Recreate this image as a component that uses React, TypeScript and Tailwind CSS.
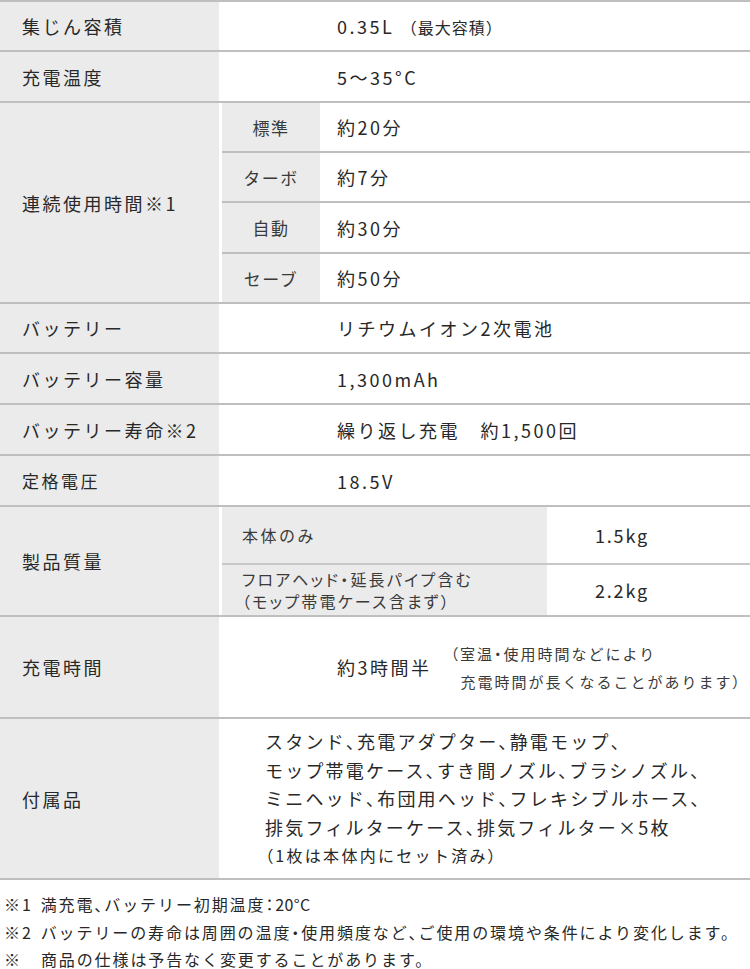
import React from "react";

const P = ({ children }: { children: React.ReactNode }) => (
  <span className="[font-feature-settings:'palt']">{children}</span>
);

function SimpleRow({ label, value, h }: { label: React.ReactNode; value: React.ReactNode; h: string }) {
  return (
    <div className={`flex border-b-2 border-[#bfbfbf] ${h}`}>
      <div className="w-[219px] shrink-0 bg-[#ebebeb] pl-[22px] flex items-center">{label}</div>
      <div className="flex-1 pl-[118px] flex items-center">{value}</div>
    </div>
  );
}

export default function App() {
  const sub = [
    { k: "標準", v: "約20分", h: "h-[50px] border-b-2" },
    { k: "ターボ", v: "約7分", h: "h-[50px] border-b-2" },
    { k: "自動", v: "約30分", h: "h-[51px] border-b-2" },
    { k: "セーブ", v: "約50分", h: "flex-1" },
  ];
  return (
    <div className="w-[750px] bg-white text-[#282828] font-['Noto_Sans_CJK_JP',sans-serif] text-[18px] tracking-[2.5px] leading-none">
      <div className="border-t-2 border-[#bfbfbf]">
        <SimpleRow
          h="h-[50px]"
          label="集じん容積"
          value={
            <span>
              0.35L <span className="text-[16px] tracking-[1px]">（最大容積）</span>
            </span>
          }
        />
        <SimpleRow h="h-[51px]" label="充電温度" value="5～35°C" />
        <div className="flex h-[201px] border-b-2 border-[#bfbfbf]">
          <div className="w-[219px] shrink-0 bg-[#ebebeb] pl-[22px] flex items-center">連続使用時間※1</div>
          <div className="flex-1 ml-[3px] flex flex-col">
            {sub.map((s) => (
              <div key={s.k} className={`flex border-[#bfbfbf] ${s.h}`}>
                <div className="w-[98px] bg-[#ebebeb] flex items-center justify-center text-[17px] tracking-[1.5px] text-[#3a3a3a]">
                  {s.k}
                </div>
                <div className="flex-1 pl-[17px] flex items-center">{s.v}</div>
              </div>
            ))}
          </div>
        </div>
        <SimpleRow h="h-[50px]" label="バッテリー" value="リチウムイオン2次電池" />
        <SimpleRow h="h-[51px]" label="バッテリー容量" value="1,300mAh" />
        <SimpleRow h="h-[51px]" label="バッテリー寿命※2" value="繰り返し充電　約1,500回" />
        <SimpleRow h="h-[51px]" label={<span className="text-[17px]">定格電圧</span>} value="18.5V" />
        <div className="flex h-[110px] border-b-2 border-[#bfbfbf]">
          <div className="w-[219px] shrink-0 bg-[#ebebeb] pl-[22px] flex items-center">製品質量</div>
          <div className="flex-1 ml-[3px] flex flex-col">
            <div className="flex h-[58px] border-b-2 border-[#c8c8c8]">
              <div className="w-[325px] bg-[#ebebeb] pl-[20px] flex items-center text-[16px] tracking-[2.5px] text-[#3a3a3a]">
                本体のみ
              </div>
              <div className="flex-1 pl-[48px] flex items-center tracking-[1.8px]">1.5kg</div>
            </div>
            <div className="flex flex-1">
              <div className="w-[325px] bg-[#ebebeb] pl-[20px] flex flex-col justify-center text-[16px] tracking-[2.2px] leading-[22px] text-[#3a3a3a] [font-feature-settings:'palt']">
                <div>フロアヘッド・延長パイプ含む</div>
                <div>（モップ帯電ケース含まず）</div>
              </div>
              <div className="flex-1 pl-[48px] flex items-center tracking-[1.8px]">2.2kg</div>
            </div>
          </div>
        </div>
        <div className="flex h-[102px] border-b-2 border-[#bfbfbf]">
          <div className="w-[219px] shrink-0 bg-[#ebebeb] pl-[22px] flex items-center">充電時間</div>
          <div className="flex-1 pl-[118px] flex items-center">
            <span>約3時間半</span>
            <div className="ml-[19px] mt-[1px] text-[15px] tracking-[2px] leading-[28px] text-[#3a3a3a]">
              <div>
                <P>（</P>室温<P>・</P>使用時間などにより
              </div>
              <div className="pl-[10px]">
                充電時間が長くなることがあります<P>）</P>
              </div>
            </div>
          </div>
        </div>
        <div className="flex h-[161px] border-b-2 border-[#bfbfbf]">
          <div className="w-[219px] shrink-0 bg-[#ebebeb] pl-[22px] flex items-center">付属品</div>
          <div className="flex-1 pl-[46px] flex flex-col justify-center leading-[28.5px] tracking-[2.2px]">
            <div>
              スタンド<P>、</P>充電アダプター<P>、</P>静電モップ<P>、</P>
            </div>
            <div>
              モップ帯電ケース<P>、</P>すき間ノズル<P>、</P>ブラシノズル<P>、</P>
            </div>
            <div>
              ミニヘッド<P>、</P>布団用ヘッド<P>、</P>フレキシブルホース<P>、</P>
            </div>
            <div>
              排気フィルターケース<P>、</P>排気フィルター×5枚
            </div>
            <div className="text-[16px] tracking-[2.3px]">
              <P>（</P>1枚は本体内にセット済み<P>）</P>
            </div>
          </div>
        </div>
      </div>
      <div className="mt-[11px] pl-[4px] text-[16px] tracking-[1.9px] leading-[27.5px] text-[#282828]">
        <div>
          ※1
          <span className="ml-[8px]">
            満充電<P>、</P>バッテリー初期温度<P>：</P>
            <span className="tracking-[0.3px]">20°C</span>
          </span>
        </div>
        <div>
          ※2
          <span className="ml-[8px]">
            バッテリーの寿命は周囲の温度<P>・</P>使用頻度など<P>、</P>ご使用の環境や条件により変化します。
          </span>
        </div>
        <div>
          ※<span className="ml-[19px]">商品の仕様は予告なく変更することがあります。</span>
        </div>
      </div>
    </div>
  );
}
